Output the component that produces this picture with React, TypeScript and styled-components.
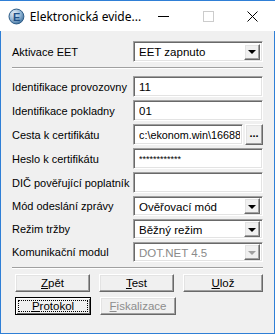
import React from "react";
import styled, { createGlobalStyle } from "styled-components";

const Global = createGlobalStyle`
  html, body { margin: 0; padding: 0; background: #fff; }
  body { font-family: "Liberation Sans", Arial, sans-serif; }
`;

const Window = styled.div`
  width: 275px;
  height: 334px;
  box-sizing: border-box;
  border: 1px solid #2f7fd6;
  border-top: none;
  background: #f0f0f0;
  display: flex;
  flex-direction: column;
`;

const TitleBar = styled.div`
  height: 30px;
  background: #fff;
  display: flex;
  align-items: center;
  padding-left: 8px;
  margin: 0 -1px;
  border-top: 1px solid #2f7fd6;
`;

const Title = styled.div`
  font-family: "Noto Sans", "Open Sans", sans-serif;
  font-size: 12px;
  color: #000;
  margin-left: 5px;
  flex: 1;
  white-space: nowrap;
`;

const Caption = styled.div`
  width: 45px;
  height: 30px;
  display: flex;
  align-items: center;
  justify-content: center;
`;

const Body = styled.div`
  padding: 10px 11px 0 10px;
  display: flex;
  flex-direction: column;
`;

const Row = styled.div<{ $h: number; $gap: number }>`
  display: flex;
  align-items: center;
  height: ${(p) => p.$h}px;
  margin-bottom: ${(p) => p.$gap}px;
`;

const Label = styled.div`
  width: 121px;
  padding-left: 1px;
  font-size: 11px;
  color: #000;
  white-space: nowrap;
`;

const Separator = styled.div<{ $top: number; $bottom: number }>`
  height: 0;
  border-top: 1px solid #a0a0a0;
  border-bottom: 1px solid #fff;
  margin: ${(p) => p.$top}px 0 ${(p) => p.$bottom}px 1px;
`;

const Field = styled.div<{ $disabled?: boolean }>`
  flex: 1;
  min-width: 0;
  height: 100%;
  box-sizing: border-box;
  background: #fff;
  border-top: 1px solid #a0a0a0;
  border-left: 1px solid #a0a0a0;
  border-right: 1px solid #fff;
  border-bottom: 1px solid #fff;
  box-shadow: inset 1px 1px 0 #696969, inset -1px -1px 0 #e3e3e3;
  display: flex;
  align-items: center;
  padding: 0 2px 0 5px;
  font-size: 11.5px;
  color: ${(p) => (p.$disabled ? "#8a8a8a" : "#000")};
  overflow: hidden;
  white-space: nowrap;
`;

const FieldText = styled.span<{ $size?: number }>`
  flex: 1;
  min-width: 0;
  overflow: hidden;
  padding-top: 1px;
  font-size: ${(p) => (p.$size ? `${p.$size}px` : "inherit")};
`;

const Raised = styled.div`
  box-sizing: border-box;
  background: #f0f0f0;
  border-top: 1px solid #fff;
  border-left: 1px solid #fff;
  border-right: 1px solid #696969;
  border-bottom: 1px solid #696969;
  box-shadow: inset -1px -1px 0 #a0a0a0, inset 1px 1px 0 #e3e3e3;
  display: flex;
  align-items: center;
  justify-content: center;
`;

const ArrowBtn = styled(Raised)`
  width: 16px;
  height: 16px;
  flex: none;
`;

const Arrow = styled.div<{ $disabled?: boolean }>`
  width: 0;
  height: 0;
  border-left: 4px solid transparent;
  border-right: 4px solid transparent;
  border-top: 4px solid ${(p) => (p.$disabled ? "#a0a0a0" : "#000")};
  margin-top: 1px;
`;

const DotsBtn = styled(Raised)`
  width: 18px;
  height: 21px;
  margin-left: 2px;
  flex: none;
  font-size: 11px;
  font-weight: bold;
  padding-bottom: 4px;
`;

const ButtonRow = styled.div`
  display: flex;
  gap: 9px;
  margin-left: 4px;
  margin-bottom: 5px;
`;

const Button = styled(Raised)<{ $w: number; $disabled?: boolean; $default?: boolean }>`
  width: ${(p) => p.$w}px;
  height: 18px;
  font-size: 11.5px;
  color: ${(p) => (p.$disabled ? "#8d8d8d" : "#000")};
  ${(p) =>
    p.$default
      ? `border: 1px solid #000; box-shadow: inset 1px 1px 0 #fff, inset -1px -1px 0 #696969;`
      : ""}
  position: relative;
`;

const Focus = styled.div`
  position: absolute;
  inset: 2px;
  border: 1px dotted #000;
`;

const Mn = styled.span`
  text-decoration: underline;
`;

function Combo({ value, disabled }: { value: string; disabled?: boolean }) {
  return (
    <Field $disabled={disabled}>
      <FieldText>{value}</FieldText>
      <ArrowBtn>
        <Arrow $disabled={disabled} />
      </ArrowBtn>
    </Field>
  );
}

function AppIcon() {
  return (
    <svg width="17" height="17" viewBox="0 0 17 17">
      <defs>
        <radialGradient id="g" cx="0.35" cy="0.3" r="0.75">
          <stop offset="0" stopColor="#e4eef7" />
          <stop offset="0.6" stopColor="#8fb3d3" />
          <stop offset="1" stopColor="#3e6f9c" />
        </radialGradient>
      </defs>
      <circle cx="8.5" cy="8.5" r="7.5" fill="url(#g)" stroke="#2d5b86" strokeWidth="1" />
      <text x="8.6" y="13" textAnchor="middle" fontSize="11" fontWeight="bold" fill="#1f4f86" fontFamily="Liberation Sans, sans-serif">
        E
      </text>
    </svg>
  );
}

export default function App() {
  return (
    <>
      <Global />
      <Window>
        <TitleBar>
          <AppIcon />
          <Title>Elektronická evide...</Title>
          <Caption>
            <svg width="11" height="11" viewBox="0 0 11 11">
              <line x1="0" y1="5.5" x2="11" y2="5.5" stroke="#000" strokeWidth="1" />
            </svg>
          </Caption>
          <Caption>
            <svg width="11" height="11" viewBox="0 0 11 11">
              <rect x="0.5" y="0.5" width="10" height="10" fill="none" stroke="#cccccc" strokeWidth="1" />
            </svg>
          </Caption>
          <Caption>
            <svg width="11" height="11" viewBox="0 0 11 11">
              <path d="M0.5 0.5 L10.5 10.5 M10.5 0.5 L0.5 10.5" stroke="#000" strokeWidth="1" />
            </svg>
          </Caption>
        </TitleBar>
        <Body>
          <Row $h={21} $gap={0}>
            <Label>Aktivace EET</Label>
            <Combo value="EET zapnuto" />
          </Row>
          <Separator $top={5} $bottom={7} />
          <Row $h={21} $gap={3}>
            <Label>Identifikace provozovny</Label>
            <Field>
              <FieldText>11</FieldText>
            </Field>
          </Row>
          <Row $h={21} $gap={3}>
            <Label>Identifikace pokladny</Label>
            <Field>
              <FieldText>01</FieldText>
            </Field>
          </Row>
          <Row $h={21} $gap={3}>
            <Label>Cesta k certifikátu</Label>
            <Field>
              <FieldText $size={10.8}>c:\ekonom.win\16688</FieldText>
            </Field>
            <DotsBtn>...</DotsBtn>
          </Row>
          <Row $h={21} $gap={3}>
            <Label>Heslo k certifikátu</Label>
            <Field>
              <FieldText $size={9}>************</FieldText>
            </Field>
          </Row>
          <Row $h={21} $gap={3}>
            <Label>DIČ pověřující poplatník</Label>
            <Field>
              <FieldText />
            </Field>
          </Row>
          <Row $h={20} $gap={3}>
            <Label>Mód odeslání zprávy</Label>
            <Combo value="Ověřovací mód" />
          </Row>
          <Row $h={20} $gap={3}>
            <Label>Režim tržby</Label>
            <Combo value="Běžný režim" />
          </Row>
          <Row $h={20} $gap={0}>
            <Label>Komunikační modul</Label>
            <Combo value="DOT.NET 4.5" disabled />
          </Row>
          <Separator $top={5} $bottom={5} />
          <ButtonRow>
            <Button $w={76}>
              <span>
                <Mn>Z</Mn>pět
              </span>
            </Button>
            <Button $w={76}>
              <span>
                <Mn>T</Mn>est
              </span>
            </Button>
            <Button $w={81}>
              <span>
                <Mn>U</Mn>lož
              </span>
            </Button>
          </ButtonRow>
          <ButtonRow>
            <Button $w={76} $default>
              <Focus />
              <span>
                <Mn>P</Mn>rotokol
              </span>
            </Button>
            <Button $w={76} $disabled>
              <span>
                <Mn>F</Mn>iskalizace
              </span>
            </Button>
          </ButtonRow>
        </Body>
      </Window>
    </>
  );
}
